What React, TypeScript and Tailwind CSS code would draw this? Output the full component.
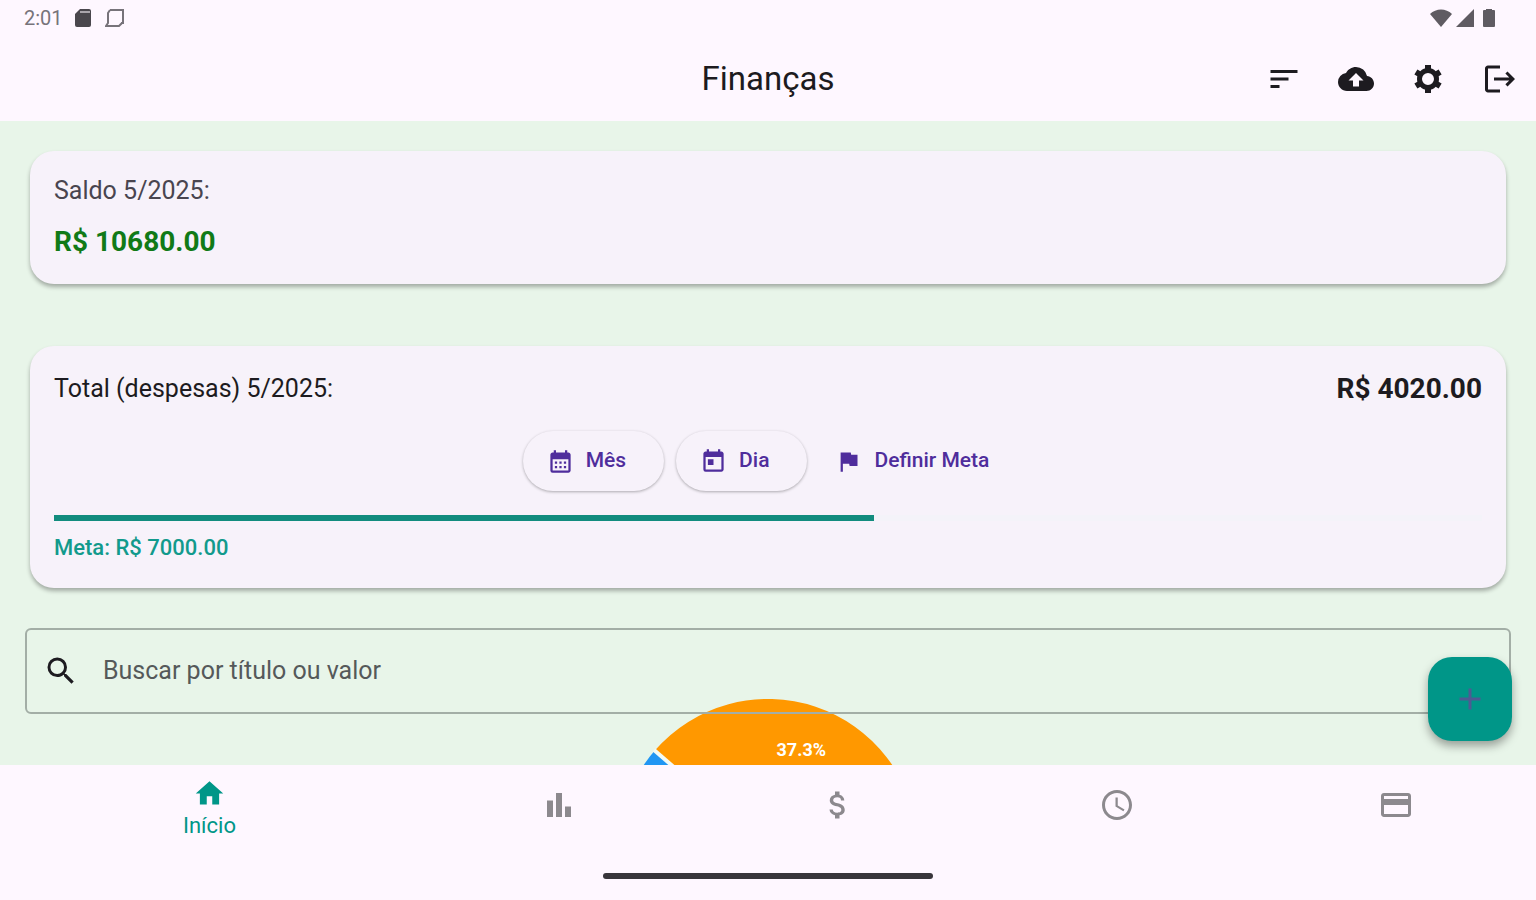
import React, { useState } from 'react'
import {
  MdAccessTime,
  MdAdd,
  MdAttachMoney,
  MdBackup,
  MdBarChart,
  MdCalendarMonth,
  MdCreditCard,
  MdFlag,
  MdHome,
  MdLogout,
  MdSearch,
  MdSort,
  MdToday,
} from 'react-icons/md'

const SALDO = 10680
const DESPESAS = 4020
const META = 7000
const MES = '5/2025'

function GearIcon({ size }: { size: number }) {
  return (
    <svg viewBox="0 0 36 36" width={size} height={size} fill="none" stroke="currentColor">
      <circle cx="18" cy="18" r="8.500" strokeWidth="5" />
      {[0, 60, 120].map((deg) => (
        <path
          key={deg}
          d="M18 4v4M18 28v4"
          strokeWidth="6"
          strokeLinejoin="round"
          transform={`rotate(${deg} 18 18)`}
        />
      ))}
    </svg>
  )
}

const ACTIONS = [
  { label: 'Ordenar', icon: MdSort },
  { label: 'Backup', icon: MdBackup },
  { label: 'Configurações', icon: GearIcon },
  { label: 'Sair', icon: MdLogout },
]

const TABS = [
  { key: 'inicio', label: 'Início', icon: MdHome },
  { key: 'graficos', label: 'Gráficos', icon: MdBarChart },
  { key: 'receitas', label: 'Receitas', icon: MdAttachMoney },
  { key: 'historico', label: 'Histórico', icon: MdAccessTime },
  { key: 'cartoes', label: 'Cartões', icon: MdCreditCard },
]

// start/end in degrees, clockwise from the top
const SLICES = [
  { color: '#ff9800', start: -49, end: 86, label: '37.3%' },
  { color: '#4caf50', start: 86, end: 200, label: '' },
  { color: '#2196f3', start: 200, end: 311, label: '' },
]

const money = (value: number) => `R$ ${value.toFixed(2)}`

function point(deg: number, r: number) {
  const rad = (deg * Math.PI) / 180
  return { x: 150 + r * Math.sin(rad), y: 150 - r * Math.cos(rad) }
}

function StatusBar() {
  return (
    <div className="flex h-9 items-center justify-between pr-10 pl-6 text-[#5f5b62]">
      <div className="flex items-center gap-3">
        <span className="text-xl text-[#77737a]">2:01</span>
        <svg viewBox="0 0 16 18" className="h-[18px] w-4">
          <path d="M5 0h9a2 2 0 0 1 2 2v14a2 2 0 0 1-2 2H2a2 2 0 0 1-2-2V5z" fill="#4a474d" />
          <path d="M5 3h10" stroke="#aaa5ac" strokeWidth="2" />
        </svg>
        <svg viewBox="0 0 20 18" className="ml-0.5 h-[18px] w-5" fill="none" stroke="#77737a" strokeWidth="2">
          <path d="M5 1h13v13h-2M5 1 3 4v10l-2 3h13l3-3" />
        </svg>
      </div>
      <div className="flex items-center">
        <svg viewBox="0 0 22 18" className="h-[18px] w-[22px]" fill="currentColor">
          <path d="M11 18 0 5C6-1 16-1 22 5z" />
        </svg>
        <svg viewBox="0 0 18 18" className="ml-1 h-[18px] w-[18px]" fill="currentColor">
          <path d="M18 0v18H0z" />
        </svg>
        <svg viewBox="0 0 14 18" className="ml-2 h-[18px] w-[14px]" fill="currentColor">
          <path d="M4 0h6v1h2a1 1 0 0 1 1 1v15a1 1 0 0 1-1 1H2a1 1 0 0 1-1-1V2a1 1 0 0 1 1-1h2z" />
        </svg>
      </div>
    </div>
  )
}

function PieChart() {
  return (
    <svg viewBox="0 0 300 300" className="mx-auto -mt-[15px] block h-[300px] w-[300px]">
      {SLICES.map((s) => {
        const a = point(s.start, 150)
        const b = point(s.end, 150)
        return (
          <path
            key={s.color}
            d={`M150 150L${a.x} ${a.y}A150 150 0 0 1 ${b.x} ${b.y}Z`}
            fill={s.color}
          />
        )
      })}
      {SLICES.map((s) => {
        const p = point(s.start, 151)
        return (
          <line key={s.color} x1="150" y1="150" x2={p.x} y2={p.y} stroke="#f3faf4" strokeWidth="4" />
        )
      })}
      {SLICES.filter((s) => s.label).map((s) => {
        const p = point((s.start + s.end) / 2, 105)
        return (
          <text
            key={s.label}
            x={p.x}
            y={p.y}
            textAnchor="middle"
            dominantBaseline="central"
            className="fill-white text-lg font-bold"
          >
            {s.label}
          </text>
        )
      })}
    </svg>
  )
}

export default function App() {
  const [tab, setTab] = useState('inicio')
  const [busca, setBusca] = useState('')

  return (
    <div className="flex h-screen flex-col overflow-hidden bg-[#fef7ff] font-['Roboto',sans-serif] text-[#1d1b20]">
      <StatusBar />

      <header className="grid h-[85px] shrink-0 grid-cols-[1fr_auto_1fr] items-center">
        <h1 className="col-start-2 text-[33px]">Finanças</h1>
        <div className="flex justify-end">
          {ACTIONS.map(({ label, icon: Icon }) => (
            <button
              key={label}
              aria-label={label}
              className="flex h-[72px] w-[72px] items-center justify-center"
            >
              <Icon size={36} />
            </button>
          ))}
        </div>
      </header>

      <div className="relative min-h-0 flex-1">
        <main className="h-full overflow-hidden bg-[#e8f5e9] px-6 pt-[30px]">
          {/* Saldo do mês */}
          <section className="mx-1.5 rounded-3xl bg-[#f7f2fa] p-6 shadow-[0_3px_4px_rgba(0,0,0,0.3)]">
            <p className="text-[25px] leading-8 text-[#49454f]">Saldo {MES}:</p>
            <p className="mt-4 text-[28px] leading-[37px] font-bold text-[#117a17]">{money(SALDO)}</p>
          </section>

          {/* Despesas e meta */}
          <section className="mx-1.5 mt-[62px] rounded-3xl bg-[#f7f2fa] p-6 shadow-[0_3px_4px_rgba(0,0,0,0.3)]">
            <div className="flex items-center justify-between">
              <p className="text-[25px] leading-[37px]">Total (despesas) {MES}:</p>
              <p className="text-[28px] leading-[37px] font-bold">{money(DESPESAS)}</p>
            </div>

            <div className="mt-6 flex justify-center gap-3 text-[21px] font-medium text-[#4f2d9c]">
              <button className="flex h-[60px] items-center gap-3 rounded-full bg-[#f7f2fa] pr-[38px] pl-6 shadow-[0_1px_3px_rgba(0,0,0,0.3)]">
                <MdCalendarMonth size={27} />
                Mês
              </button>
              <button className="flex h-[60px] items-center gap-3 rounded-full bg-[#f7f2fa] pr-[38px] pl-6 shadow-[0_1px_3px_rgba(0,0,0,0.3)]">
                <MdToday size={27} />
                Dia
              </button>
              <button className="flex h-[60px] items-center gap-3 rounded-full pr-6 pl-4">
                <MdFlag size={27} />
                Definir Meta
              </button>
            </div>

            <div
              role="progressbar"
              aria-label="Meta de despesas"
              aria-valuenow={DESPESAS}
              aria-valuemax={META}
              className="mt-6 h-1.5 bg-[#f4f3f9]"
            >
              <div className="h-full bg-[#128c7e]" style={{ width: `${(DESPESAS / META) * 100}%` }} />
            </div>
            <p className="mt-[11px] text-[22px] leading-8 font-medium text-[#129a8c]">
              Meta: {money(META)}
            </p>
          </section>

          {/* relative: a borda fica por cima do gráfico */}
          <label className="relative mx-px mt-10 flex h-[86px] items-center gap-6 rounded-md border-2 border-[#a3aea6] pr-28 pl-4">
            <MdSearch size={36} className="shrink-0" />
            <input
              type="text"
              aria-label="Buscar por título ou valor"
              placeholder="Buscar por título ou valor"
              value={busca}
              onChange={(e) => setBusca(e.target.value)}
              className="min-w-0 flex-1 bg-transparent text-[25px] outline-none placeholder:text-[#55595a]"
            />
          </label>

          <PieChart />
        </main>

        <button
          aria-label="Adicionar"
          className="absolute right-6 bottom-6 flex h-[84px] w-[84px] items-center justify-center rounded-3xl bg-[#009688] text-[#4f5a93] shadow-[0_5px_10px_rgba(0,0,0,0.35)]"
        >
          <MdAdd size={36} />
        </button>
      </div>

      <nav className="flex h-[84px] shrink-0">
        {TABS.map(({ key, label, icon: Icon }) => {
          const active = key === tab
          return (
            <button
              key={key}
              aria-label={label}
              onClick={() => setTab(key)}
              className={`flex flex-col items-center justify-center ${
                active ? 'flex-3 pt-1 text-[#009688]' : 'flex-2 pb-1 text-[#8c898e]'
              }`}
            >
              <Icon size={active ? 33 : 36} />
              {active && <span className="text-[22px] leading-8">{label}</span>}
            </button>
          )
        })}
      </nav>

      <div className="flex h-[51px] shrink-0 items-center justify-center pt-0.5">
        <div className="h-1.5 w-[330px] rounded-full bg-[#38353b]" />
      </div>
    </div>
  )
}
